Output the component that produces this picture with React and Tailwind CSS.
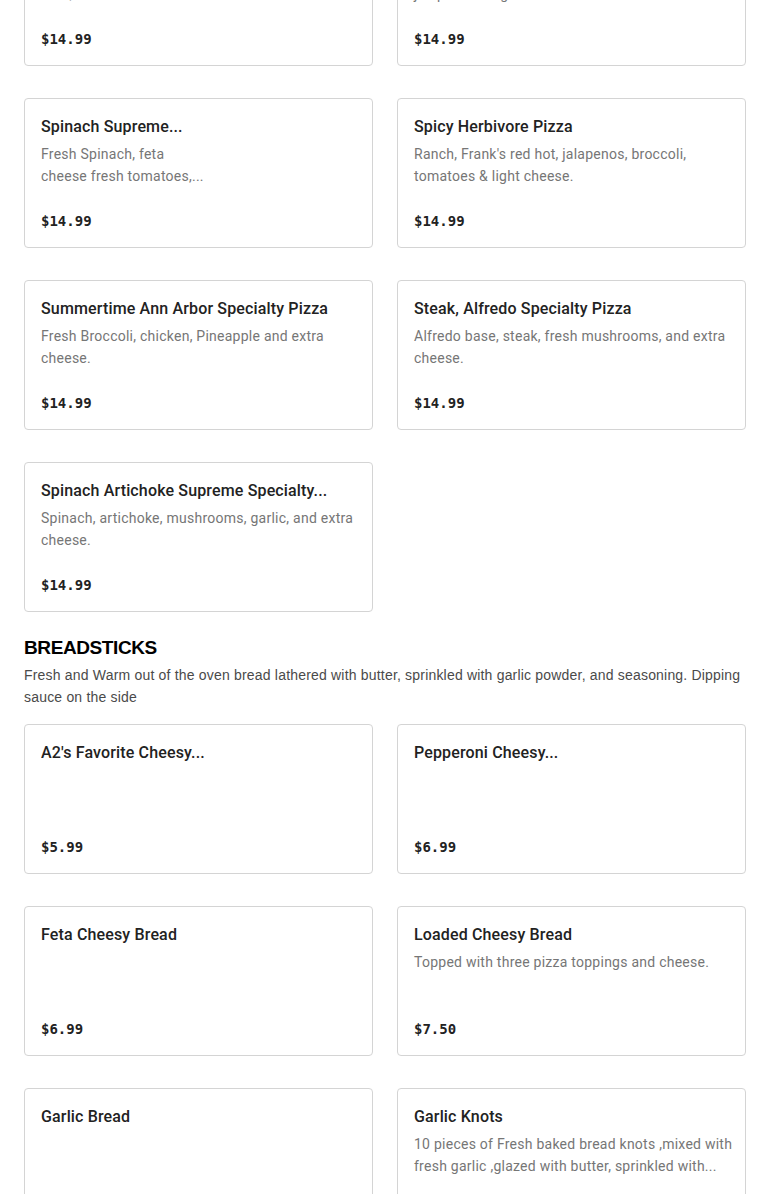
const specialty = [
  {
    name: "Meat Lovers Specialty Pizza",
    desc: "Pepperoni, ham, bacon, sausage,",
    desc2: "beef, and extra cheese.",
    price: "$14.99",
  },
  {
    name: "Buffalo Chicken Specialty Pizza",
    desc: "Buffalo sauce, chicken, banana peppers,",
    desc2: "jalapenos & light cheese.",
    price: "$14.99",
  },
  {
    name: "Spinach Supreme...",
    desc: "Fresh Spinach, feta",
    desc2: "cheese fresh tomatoes,...",
    price: "$14.99",
    image: true,
  },
  {
    name: "Spicy Herbivore Pizza",
    desc: "Ranch, Frank's red hot, jalapenos, broccoli,",
    desc2: "tomatoes & light cheese.",
    price: "$14.99",
  },
  {
    name: "Summertime Ann Arbor Specialty Pizza",
    desc: "Fresh Broccoli, chicken, Pineapple and extra",
    desc2: "cheese.",
    price: "$14.99",
  },
  {
    name: "Steak, Alfredo Specialty Pizza",
    desc: "Alfredo base, steak, fresh mushrooms, and extra",
    desc2: "cheese.",
    price: "$14.99",
  },
  {
    name: "Spinach Artichoke Supreme Specialty...",
    desc: "Spinach, artichoke, mushrooms, garlic, and extra",
    desc2: "cheese.",
    price: "$14.99",
  },
];

const breadsticks = [
  { name: "A2's Favorite Cheesy...", price: "$5.99", image: true },
  { name: "Pepperoni Cheesy...", price: "$6.99", image: true },
  { name: "Feta Cheesy Bread", price: "$6.99" },
  {
    name: "Loaded Cheesy Bread",
    desc: "Topped with three pizza toppings and cheese.",
    price: "$7.50",
  },
  { name: "Garlic Bread", price: "$6.99" },
  {
    name: "Garlic Knots",
    desc: "10 pieces of Fresh baked bread knots ,mixed with",
    desc2: "fresh garlic ,glazed with butter, sprinkled with...",
    price: "$7.99",
  },
];

function ItemCard({ item }) {
  return (
    <div className="h-[150px] flex border border-[#d4d4d4] rounded-[4px] bg-white overflow-hidden">
      <div className="flex-1 flex flex-col p-4 min-w-0">
        <h3 className="text-[16px] leading-6 font-medium tracking-[0.15px] text-[#222] whitespace-nowrap overflow-hidden">
          {item.name}
        </h3>
        {item.desc && (
          <p className="mt-1 text-[14px] leading-[22px] tracking-[0.25px] text-[#767676]">
            <span className="block whitespace-nowrap">{item.desc}</span>
            {item.desc2 && <span className="block whitespace-nowrap">{item.desc2}</span>}
          </p>
        )}
        <div className="mt-auto text-[14px] leading-5 font-bold text-[#222] font-['DejaVu_Sans_Mono',monospace]">
          {item.price}
        </div>
      </div>
      {item.image && <div className="w-[140px] shrink-0" />}
    </div>
  );
}

export default function App() {
  return (
    <div className="bg-white min-h-[1194px] overflow-hidden font-['Roboto',sans-serif]">
      <div className="px-6 -mt-[84px]">
        <div className="grid grid-cols-2 gap-x-6 gap-y-8">
          {specialty.map((item, i) => (
            <ItemCard key={i} item={item} />
          ))}
        </div>

        <section className="mt-6">
          <h2 className="text-[19px] leading-6 font-extrabold text-black font-['Liberation_Sans',sans-serif] tracking-[-0.4px]">
            BREADSTICKS
          </h2>
          <p className="mt-1 text-[14px] leading-[22px] tracking-[0.19px] text-[#4a4a4a] font-['Liberation_Sans',sans-serif]">
            Fresh and Warm out of the oven bread lathered with butter, sprinkled with garlic powder, and seasoning. Dipping sauce on the side
          </p>
          <div className="mt-4 grid grid-cols-2 gap-x-6 gap-y-8">
            {breadsticks.map((item, i) => (
              <ItemCard key={i} item={item} />
            ))}
          </div>
        </section>
      </div>
    </div>
  );
}
